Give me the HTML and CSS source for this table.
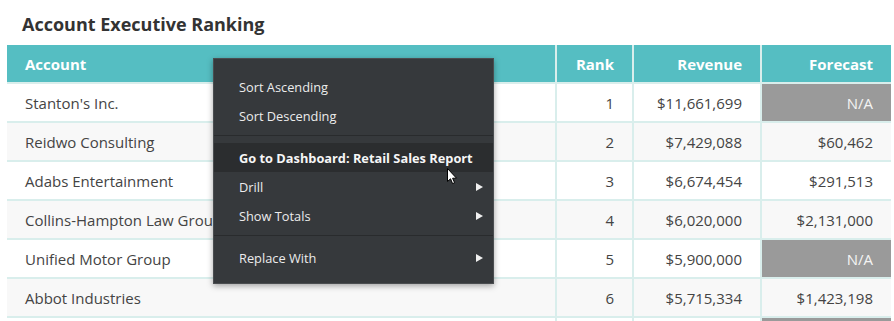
FILE: index.html
```html
<!DOCTYPE html>
<html>
<head>
<meta charset="utf-8">
<link rel="stylesheet" href="styles.css">
</head>
<body>
<div class="page">
  <h2 class="title">Account Executive Ranking</h2>
  <div class="grid">
    <div class="hd">Account</div>
    <div class="hd num">Rank</div>
    <div class="hd num">Revenue</div>
    <div class="hd num">Forecast</div>

    <div class="c">Stanton's Inc.</div>
    <div class="c num">1</div>
    <div class="c num">$11,661,699</div>
    <div class="c num na">N/A</div>

    <div class="c alt">Reidwo Consulting</div>
    <div class="c alt num">2</div>
    <div class="c alt num">$7,429,088</div>
    <div class="c alt num">$60,462</div>

    <div class="c">Adabs Entertainment</div>
    <div class="c num">3</div>
    <div class="c num">$6,674,454</div>
    <div class="c num">$291,513</div>

    <div class="c alt">Collins-Hampton Law Group</div>
    <div class="c alt num">4</div>
    <div class="c alt num">$6,020,000</div>
    <div class="c alt num">$2,131,000</div>

    <div class="c">Unified Motor Group</div>
    <div class="c num">5</div>
    <div class="c num">$5,900,000</div>
    <div class="c num na">N/A</div>

    <div class="c alt">Abbot Industries</div>
    <div class="c alt num">6</div>
    <div class="c alt num">$5,715,334</div>
    <div class="c alt num">$1,423,198</div>

    <div class="c"></div>
    <div class="c num"></div>
    <div class="c num"></div>
    <div class="c num na"></div>
  </div>
</div>

<div class="menu">
  <div class="item">Sort Ascending</div>
  <div class="item">Sort Descending</div>
  <div class="sep"></div>
  <div class="item active">Go to Dashboard: Retail Sales Report</div>
  <div class="item sub">Drill<span class="arrow"></span></div>
  <div class="item sub">Show Totals<span class="arrow"></span></div>
  <div class="sep"></div>
  <div class="item sub">Replace With<span class="arrow"></span></div>
</div>

<svg class="cursor" width="12" height="18" viewBox="0 0 12 18">
  <path d="M0.5 0.5 L0.5 13.5 L3.5 10.8 L5.6 15.6 L7.6 14.7 L5.6 10.2 L9.5 10.2 Z" fill="#fff" stroke="#000" stroke-width="1" stroke-linejoin="round"/>
</svg>
</body>
</html>
```

FILE: styles.css
```css
html, body {
  margin: 0;
  padding: 0;
  background: #ffffff;
  overflow: hidden;
}

.page {
  padding: 12px 3px 0 7px;
  font-family: "Open Sans", "Noto Sans", sans-serif;
  color: #444;
}

.title {
  margin: 0 0 8px 15px;
  font-size: 18px;
  font-weight: 700;
  line-height: 25px;
  color: #333;
}

.grid {
  display: grid;
  grid-template-columns: 548px 75px 126px 129px;
  grid-auto-rows: 37px;
  gap: 2px;
  background: #d9eeec;
  width: 884px;
}

.hd {
  background: #55bec2;
  color: #fff;
  font-weight: 700;
  font-size: 15px;
  display: flex;
  align-items: center;
  padding: 0 18px;
}

.c {
  background: #fff;
  font-size: 15px;
  display: flex;
  align-items: center;
  padding: 0 18px;
  white-space: nowrap;
  overflow: hidden;
}

.c.alt {
  background: #f8f8f8;
}

.num {
  justify-content: flex-end;
}

.c.na {
  background: #9a9a9a;
  color: #f4f4f4;
}

.menu {
  position: absolute;
  left: 213px;
  top: 58px;
  width: 279px;
  padding: 13px 0 11px;
  background: #36393c;
  border: 1px solid #4a4d50;
  box-shadow: 0 2px 6px rgba(0, 0, 0, 0.35);
  font-family: "Open Sans", "Noto Sans", sans-serif;
  font-size: 12.8px;
  color: #ececec;
}

.item {
  height: 29px;
  display: flex;
  align-items: center;
  padding: 0 10px 0 25px;
  justify-content: space-between;
}

.item.active {
  background: #2b2d2f;
  font-weight: 700;
  color: #f6f6f6;
}

.sep {
  height: 13px;
  position: relative;
}

.sep::after {
  content: "";
  position: absolute;
  left: 0;
  right: 0;
  top: 5px;
  height: 1px;
  background: #292b2d;
}

.arrow {
  width: 0;
  height: 0;
  border-top: 4px solid transparent;
  border-bottom: 4px solid transparent;
  border-left: 7px solid #f0f0f0;
}

.cursor {
  position: absolute;
  left: 447px;
  top: 168px;
}
```
